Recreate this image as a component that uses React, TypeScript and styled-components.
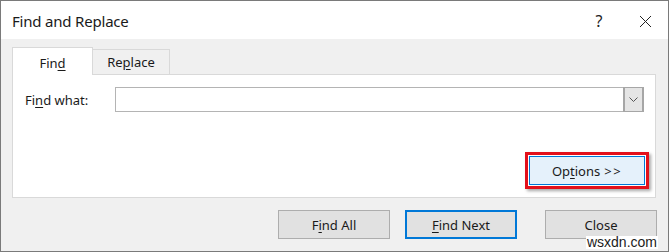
import styled, { createGlobalStyle } from "styled-components";

const GlobalStyle = createGlobalStyle`
  html, body {
    margin: 0;
    padding: 0;
    background: #ffffff;
  }
  * {
    box-sizing: border-box;
  }
`;

const font = `"Noto Sans", "Open Sans", Arial, sans-serif`;

const Window = styled.div`
  position: relative;
  width: 669px;
  height: 252px;
  border: 1px solid #7a7a7a;
  display: flex;
  flex-direction: column;
  font-family: ${font};
  color: #1a1a1a;
  background: #f0f0f0;
`;

const TitleBar = styled.div`
  height: 38px;
  background: #ffffff;
  display: flex;
  align-items: center;
  padding-left: 11px;
  padding-top: 2px;
`;

const Title = styled.div`
  flex: 1;
  font-size: 15px;
  letter-spacing: -0.2px;
`;

const TitleButton = styled.div`
  width: 46px;
  height: 100%;
  display: flex;
  align-items: center;
  justify-content: center;
  font-size: 16px;
  color: #222;
`;

const Body = styled.div`
  flex: 1;
  padding: 9px 12px 0 11px;
  display: flex;
  flex-direction: column;
`;

const Tabs = styled.div`
  display: flex;
  align-items: flex-end;
  height: 27px;
  position: relative;
  z-index: 1;
  margin-bottom: -1px;
`;

const Tab = styled.div<{ $active?: boolean }>`
  width: ${(p) => (p.$active ? 81 : 77)}px;
  height: ${(p) => (p.$active ? 28 : 26)}px;
  display: flex;
  align-items: center;
  justify-content: center;
  font-size: 13px;
  border: 1px solid #d9d9d9;
  border-bottom: ${(p) => (p.$active ? "none" : "1px solid #d9d9d9")};
  border-left: ${(p) => (p.$active ? "1px solid #d9d9d9" : "none")};
  background: ${(p) => (p.$active ? "#ffffff" : "#f0f0f0")};
  padding-top: ${(p) => (p.$active ? 2 : 0)}px;
`;

const Panel = styled.div`
  height: 124px;
  background: #ffffff;
  border: 1px solid #d9d9d9;
  display: flex;
  flex-direction: column;
  justify-content: space-between;
  padding: 12px 6px 8px 12px;
`;

const FindRow = styled.div`
  display: flex;
  align-items: center;
  padding-right: 5px;
`;

const Label = styled.label`
  width: 90px;
  font-size: 13px;
`;

const Combo = styled.div`
  flex: 1;
  height: 25px;
  display: flex;
  border: 1px solid #b4b4b4;
  background: #ffffff;
`;

const ComboInput = styled.div`
  flex: 1;
`;

const ComboArrow = styled.div`
  width: 21px;
  background: #e5e5e5;
  border: 2px solid #a6a6a6;
  border-top-width: 1px;
  border-bottom-width: 1px;
  margin: -1px;
  display: flex;
  align-items: center;
  justify-content: center;
`;

const OptionsRow = styled.div`
  display: flex;
  justify-content: flex-end;
`;

const Highlight = styled.div`
  border: 3px solid #e3101b;
  padding: 1px;
  box-shadow: 2px 2px 3px rgba(0, 0, 0, 0.35);
  width: 124px;
  height: 37px;
`;

const OptionsButton = styled.div`
  height: 100%;
  background: #e5f1fb;
  border: 1px solid #0078d7;
  display: flex;
  align-items: center;
  justify-content: center;
  font-size: 13px;
`;

const Arrows = styled.span`
  margin-left: 4px;
  letter-spacing: 1.5px;
`;

const ButtonRow = styled.div`
  display: flex;
  justify-content: flex-end;
  align-items: center;
  padding-top: 12px;
  margin-right: -1px;
`;

const Button = styled.div<{ $default?: boolean; $gap?: number }>`
  width: 112px;
  height: 29px;
  margin-left: ${(p) => p.$gap ?? 0}px;
  background: #e1e1e1;
  border: ${(p) => (p.$default ? "2px solid #0078d7" : "1px solid #adadad")};
  display: flex;
  align-items: center;
  justify-content: center;
  font-size: 13px;
`;

const U = styled.span`
  text-decoration: underline;
  text-underline-offset: 2px;
`;

const Watermark = styled.div`
  position: absolute;
  right: 10px;
  bottom: 2px;
  background: #ffffff;
  padding: 0 1px;
  font-family: "Liberation Sans", Arial, sans-serif;
  font-size: 14px;
  line-height: 13px;
  color: #1c1c1c;
`;

export default function App() {
  return (
    <>
      <GlobalStyle />
      <Window>
        <TitleBar>
          <Title>Find and Replace</Title>
          <TitleButton>?</TitleButton>
          <TitleButton>
            <svg width="13" height="13" viewBox="0 0 13 13">
              <path d="M1 1 L12 12 M12 1 L1 12" stroke="#222" strokeWidth="1" fill="none" />
            </svg>
          </TitleButton>
        </TitleBar>
        <Body>
          <Tabs>
            <Tab $active>
              Fin<U>d</U>
            </Tab>
            <Tab>
              Re<U>p</U>lace
            </Tab>
          </Tabs>
          <Panel>
            <FindRow>
              <Label>
                Fi<U>n</U>d what:
              </Label>
              <Combo>
                <ComboInput />
                <ComboArrow>
                  <svg width="9" height="5" viewBox="0 0 9 5">
                    <path d="M0.5 0.5 L4.5 4.5 L8.5 0.5" stroke="#555" strokeWidth="1" fill="none" />
                  </svg>
                </ComboArrow>
              </Combo>
            </FindRow>
            <OptionsRow>
              <Highlight>
                <OptionsButton>
                  Op<U>t</U>ions<Arrows>&gt;&gt;</Arrows>
                </OptionsButton>
              </Highlight>
            </OptionsRow>
          </Panel>
          <ButtonRow>
            <Button>
              F<U>i</U>nd All
            </Button>
            <Button $default $gap={15}>
              <U>F</U>ind Next
            </Button>
            <Button $gap={28}>Close</Button>
          </ButtonRow>
        </Body>
        <Watermark>wsxdn.com</Watermark>
      </Window>
    </>
  );
}
